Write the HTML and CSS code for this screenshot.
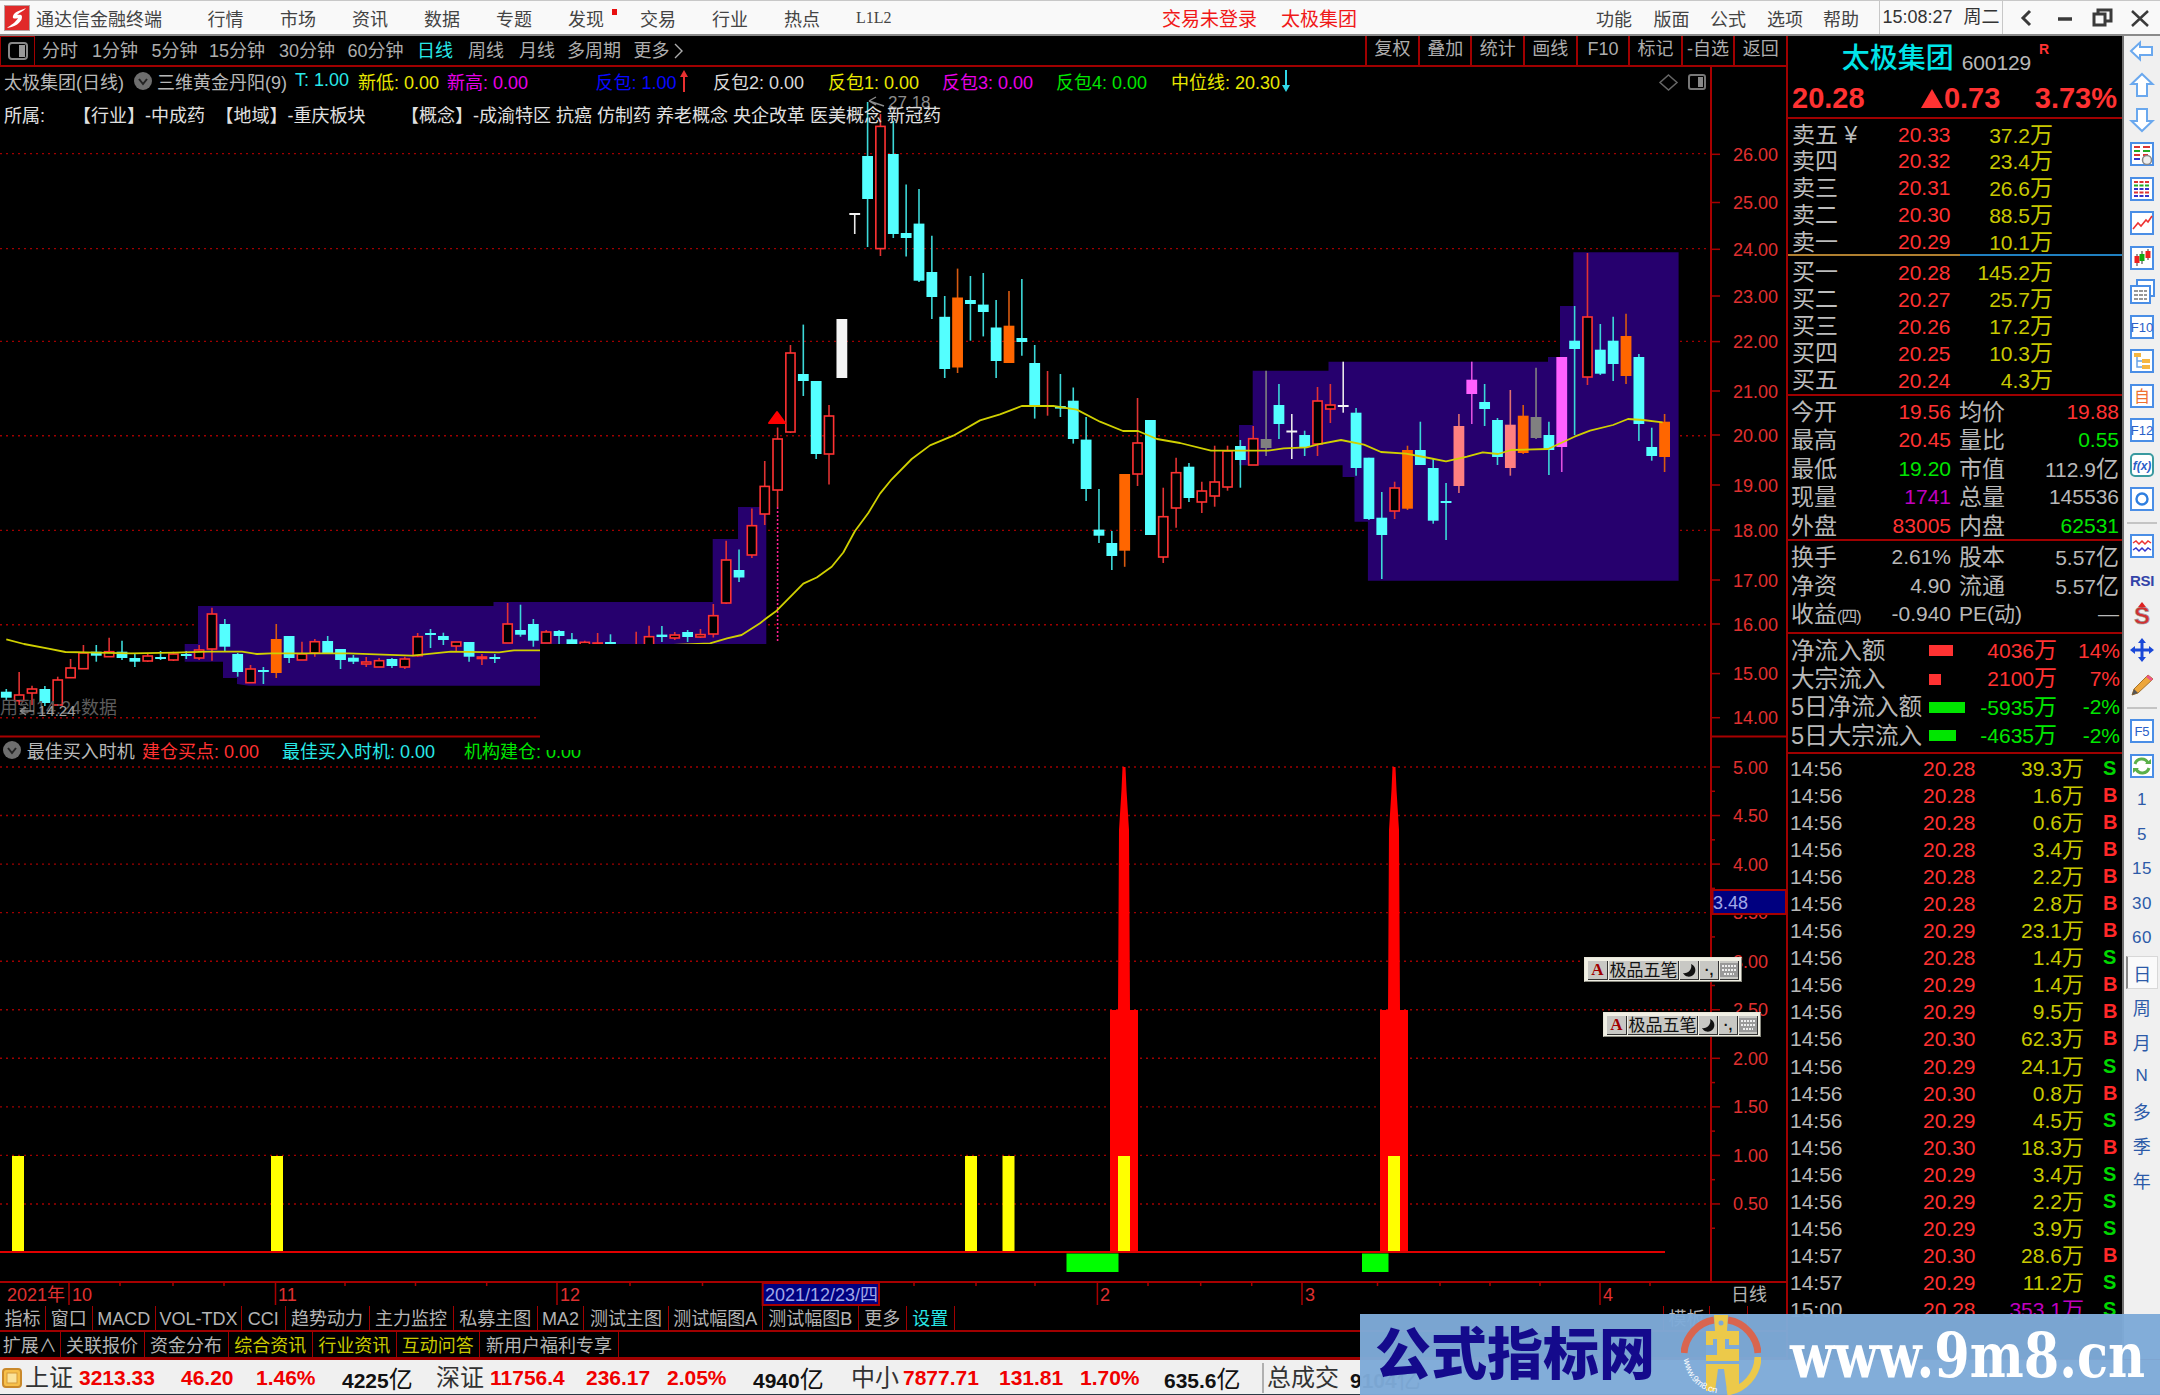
FILE: index.html
```html
<!DOCTYPE html>
<html lang="zh-CN">
<head>
<meta charset="utf-8">
<title>通达信金融终端</title>
<link rel="stylesheet" href="styles.css">
</head>
<body>
<div class="app">
  <header class="titlebar">
    <span class="logo"><svg width="26" height="26" viewBox="0 0 26 26"><rect width="26" height="26" fill="#e02a2a"/><rect x=".5" y=".5" width="25" height="25" fill="none" stroke="#b9a0a0"/><path d="M22 3 C16 6 11 6 9 11 C8 14 11 14 14 13 C12 17 7 20 3 23 C10 22 18 18 18 12 C18 9 15 10 13 10 C16 7 20 6 22 3Z" fill="#fff"/></svg></span>
    <span>通达信金融终端</span>
    <span>行情</span><span>市场</span><span>资讯</span><span>数据</span><span>专题</span>
    <span class="has-dot">发现<i class="dot"></i></span>
    <span>交易</span><span>行业</span><span>热点</span><span class="serif">L1L2</span>
    <span class="alert">交易未登录</span><span class="alert">太极集团</span>
    <span>功能</span><span>版面</span><span>公式</span><span>选项</span><span>帮助</span>
    <span class="clock">15:08:27 <em>周二</em></span>
    <span class="win"><svg width="148" height="30" viewBox="0 0 148 30" fill="none" stroke="#3a3a3a" stroke-width="3"><path d="M27 8 L20 15 L27 22"/><path d="M55 16 H69" stroke-width="3.5"/><rect x="91" y="11" width="11" height="11"/><path d="M95 11 V7 H108 V18 H102"/><path d="M129 8 L145 23 M145 8 L129 23" stroke-width="2.5"/></svg></span>
  </header>

  <div class="body">
    <div class="left">
      <div class="toolbar">
        <div class="periods">
          <span class="tb-icon"><svg width="20" height="18" viewBox="0 0 20 18"><rect x="1" y="1" width="18" height="16" rx="3" fill="none" stroke="#888" stroke-width="2"/><rect x="11" y="3" width="6" height="12" fill="#999"/></svg></span>
          <span>分时</span><span>1分钟</span><span>5分钟</span><span>15分钟</span><span>30分钟</span><span>60分钟</span>
          <span class="cyan">日线</span><span>周线</span><span>月线</span><span>多周期</span><span class="more">更多<svg width="9" height="16" viewBox="0 0 9 16"><path d="M1 1 L8 8 L1 15" fill="none" stroke="#adadad" stroke-width="1.4"/></svg></span>
        </div>
        <div class="tools">
          <span>复权</span><span>叠加</span><span>统计</span><span>画线</span><span>F10</span><span>标记</span><span>-自选</span><span>返回</span>
        </div>
      </div>

      <div class="chart">
        <svg id="kline" class="kline" width="1788" height="1239" viewBox="0 67 1788 1239"></svg>

        <div class="pane-legend">
          <span class="toggle"><svg width="18" height="18" viewBox="0 0 18 18"><circle cx="9" cy="9" r="9" fill="#6e6e6e"/><path d="M5 7 L9 12 L13 7" fill="none" stroke="#222" stroke-width="2"/></svg></span>
          <span class="grey">最佳买入时机</span>
          <span class="red">建仓买点: 0.00</span>
          <span class="cyan">最佳买入时机: 0.00</span>
          <span class="green">机构建仓: 0.00</span>
        </div>

        <div class="blackout"></div>

        <div class="info">
          <div class="info-row">
            <span class="grey">太极集团(日线)</span>
            <span class="toggle"><svg width="18" height="18" viewBox="0 0 18 18"><circle cx="9" cy="9" r="9" fill="#6e6e6e"/><path d="M5 7 L9 12 L13 7" fill="none" stroke="#222" stroke-width="2"/></svg></span>
            <span class="grey">三维黄金丹阳(9)</span>
            <span class="cyan">T: 1.00</span>
            <span class="yellow">新低: 0.00</span>
            <span class="magenta">新高: 0.00</span>
            <span class="blue">反包: 1.00</span>
            <span class="arrow"><svg width="8" height="22" viewBox="0 0 8 22"><path d="M4 0 L8 7 H5 V22 H3 V7 H0Z" fill="#e83030"/></svg></span>
            <span class="white">反包2: 0.00</span>
            <span class="yellow">反包1: 0.00</span>
            <span class="magenta">反包3: 0.00</span>
            <span class="green">反包4: 0.00</span>
            <span class="yellow">中位线: 20.30</span>
            <span class="arrow"><svg width="8" height="22" viewBox="0 0 8 22"><path d="M3 0 H5 V15 H8 L4 22 L0 15 H3Z" fill="#30d8e8"/></svg></span>
          </div>
          <div class="belong"><span>所属:</span><span>【行业】-中成药</span><span>【地域】-重庆板块</span><span>【概念】-成渝特区 抗癌 仿制药 养老概念 央企改革 医美概念 新冠药</span></div>
        </div>

        <div class="ime ime-a"><b>A</b><span>极品五笔</span><i class="ime-k"><svg width="14" height="14" viewBox="0 0 14 14"><path d="M9 1 A6.5 6.5 0 1 1 1 10 A7 7 0 0 0 9 1Z" fill="#111"/></svg></i><i class="ime-k">·,</i><i class="ime-k"><svg width="18" height="14" viewBox="0 0 18 14"><rect width="18" height="14" fill="#999"/><path d="M2 3 H16 M2 7 H16 M4 11 H14" stroke="#eee" stroke-width="2" stroke-dasharray="2 1"/></svg></i></div>
        <div class="ime ime-b"><b>A</b><span>极品五笔</span><i class="ime-k"><svg width="14" height="14" viewBox="0 0 14 14"><path d="M9 1 A6.5 6.5 0 1 1 1 10 A7 7 0 0 0 9 1Z" fill="#111"/></svg></i><i class="ime-k">·,</i><i class="ime-k"><svg width="18" height="14" viewBox="0 0 18 14"><rect width="18" height="14" fill="#999"/><path d="M2 3 H16 M2 7 H16 M4 11 H14" stroke="#eee" stroke-width="2" stroke-dasharray="2 1"/></svg></i></div>
      </div>

      <div class="tabs tabs-a">
        <span>指标</span><span>窗口</span><span>MACD</span><span>VOL-TDX</span><span>CCI</span><span>趋势动力</span><span>主力监控</span><span>私募主图</span><span>MA2</span><span>测试主图</span><span>测试幅图A</span><span>测试幅图B</span><span>更多</span><span class="cyan">设置</span><span class="blank"></span><span>模板</span><span>—</span>
      </div>
      <div class="tabs tabs-b">
        <span>扩展∧</span><span>关联报价</span><span>资金分布</span><span class="olive">综合资讯</span><span class="olive">行业资讯</span><span class="olive">互动问答</span><span>新用户福利专享</span>
      </div>
    </div>

    <aside class="quote">
      <div class="q-head"><span class="q-name">太极集团</span><span class="q-code">600129</span><span class="q-r">R</span></div>
      <div class="q-price"><b>20.28</b><b class="q-up"><i class="tri"></i>0.73</b><b>3.73%</b></div>

      <div class="book asks">
        <div><span>卖五 <u>¥</u></span><b>20.33</b><em>37.2<i>万</i></em></div>
        <div><span>卖四</span><b>20.32</b><em>23.4<i>万</i></em></div>
        <div><span>卖三</span><b>20.31</b><em>26.6<i>万</i></em></div>
        <div><span>卖二</span><b>20.30</b><em>88.5<i>万</i></em></div>
        <div><span>卖一</span><b>20.29</b><em>10.1<i>万</i></em></div>
      </div>
      <div class="twotone"></div>
      <div class="book bids">
        <div><span>买一</span><b>20.28</b><em>145.2<i>万</i></em></div>
        <div><span>买二</span><b>20.27</b><em>25.7<i>万</i></em></div>
        <div><span>买三</span><b>20.26</b><em>17.2<i>万</i></em></div>
        <div><span>买四</span><b>20.25</b><em>10.3<i>万</i></em></div>
        <div><span>买五</span><b>20.24</b><em>4.3<i>万</i></em></div>
      </div>

      <div class="stats s-a">
        <div><span>今开</span><b class="red">19.56</b><span>均价</span><b class="red">19.88</b></div>
        <div><span>最高</span><b class="red">20.45</b><span>量比</span><b class="green">0.55</b></div>
        <div><span>最低</span><b class="green">19.20</b><span>市值</span><b>112.9<i>亿</i></b></div>
        <div><span>现量</span><b class="purple">1741</b><span>总量</span><b>145536</b></div>
        <div><span>外盘</span><b class="red">83005</b><span>内盘</span><b class="green">62531</b></div>
      </div>
      <div class="stats s-b">
        <div><span>换手</span><b>2.61%</b><span>股本</span><b>5.57<i>亿</i></b></div>
        <div><span>净资</span><b>4.90</b><span>流通</span><b>5.57<i>亿</i></b></div>
        <div><span>收益<small>(四)</small></span><b>-0.940</b><span class="pe">PE(动)</span><b>—</b></div>
      </div>

      <div class="flows">
        <div><span>净流入额</span><i class="bar bar-up" style="width:24px"></i><b class="red">4036<i>万</i></b><b class="red">14%</b></div>
        <div><span>大宗流入</span><i class="bar bar-up" style="width:12px"></i><b class="red">2100<i>万</i></b><b class="red">7%</b></div>
        <div><span>5日净流入额</span><i class="bar bar-dn" style="width:36px"></i><b class="green">-5935<i>万</i></b><b class="green">-2%</b></div>
        <div><span>5日大宗流入</span><i class="bar bar-dn" style="width:27px"></i><b class="green">-4635<i>万</i></b><b class="green">-2%</b></div>
      </div>

      <div class="ticks">
        <div><span>14:56</span><b>20.28</b><em>39.3<i>万</i></em><u class="s">S</u></div>
        <div><span>14:56</span><b>20.28</b><em>1.6<i>万</i></em><u class="b">B</u></div>
        <div><span>14:56</span><b>20.28</b><em>0.6<i>万</i></em><u class="b">B</u></div>
        <div><span>14:56</span><b>20.28</b><em>3.4<i>万</i></em><u class="b">B</u></div>
        <div><span>14:56</span><b>20.28</b><em>2.2<i>万</i></em><u class="b">B</u></div>
        <div><span>14:56</span><b>20.28</b><em>2.8<i>万</i></em><u class="b">B</u></div>
        <div><span>14:56</span><b>20.29</b><em>23.1<i>万</i></em><u class="b">B</u></div>
        <div><span>14:56</span><b>20.28</b><em>1.4<i>万</i></em><u class="s">S</u></div>
        <div><span>14:56</span><b>20.29</b><em>1.4<i>万</i></em><u class="b">B</u></div>
        <div><span>14:56</span><b>20.29</b><em>9.5<i>万</i></em><u class="b">B</u></div>
        <div><span>14:56</span><b>20.30</b><em>62.3<i>万</i></em><u class="b">B</u></div>
        <div><span>14:56</span><b>20.29</b><em>24.1<i>万</i></em><u class="s">S</u></div>
        <div><span>14:56</span><b>20.30</b><em>0.8<i>万</i></em><u class="b">B</u></div>
        <div><span>14:56</span><b>20.29</b><em>4.5<i>万</i></em><u class="s">S</u></div>
        <div><span>14:56</span><b>20.30</b><em>18.3<i>万</i></em><u class="b">B</u></div>
        <div><span>14:56</span><b>20.29</b><em>3.4<i>万</i></em><u class="s">S</u></div>
        <div><span>14:56</span><b>20.29</b><em>2.2<i>万</i></em><u class="s">S</u></div>
        <div><span>14:56</span><b>20.29</b><em>3.9<i>万</i></em><u class="s">S</u></div>
        <div><span>14:57</span><b>20.30</b><em>28.6<i>万</i></em><u class="b">B</u></div>
        <div><span>14:57</span><b>20.29</b><em>11.2<i>万</i></em><u class="s">S</u></div>
        <div><span>15:00</span><b>20.28</b><em class="purple">353.1<i>万</i></em><u class="s">S</u></div>
      </div>
    </aside>

    <nav class="side">
      <a><svg class="ic" viewBox="0 0 28 28"><path class="ar" d="M3 14 L12 5.5 V10 H24 V18 H12 V22.5Z"/></svg></a>
      <a><svg class="ic" viewBox="0 0 28 28"><path class="ar" d="M14 3 L24.5 13 H19 V25 H9 V13 H3.5Z"/></svg></a>
      <a><svg class="ic" viewBox="0 0 28 28"><path class="ar" d="M14 25 L24.5 15 H19 V3 H9 V15 H3.5Z"/></svg></a>
      <a><svg class="ic" viewBox="0 0 28 28"><rect class="bx" x="3" y="3" width="22" height="22"/><path d="M6 7 H12 M15 7 H22" stroke="#d33" stroke-width="2"/><path d="M6 11 H12 M15 11 H22" stroke="#2a2" stroke-width="2"/><path d="M6 15 H12 M15 15 H20" stroke="#d33" stroke-width="2"/><path d="M6 19 H12" stroke="#33c" stroke-width="2"/><circle cx="19" cy="20" r="4.5" fill="#eee" stroke="#888" stroke-width="1.5"/></svg></a>
      <a><svg class="ic" viewBox="0 0 28 28"><rect class="bx" x="3" y="3" width="22" height="22"/><path d="M6 7 H22" stroke="#d33" stroke-width="2" stroke-dasharray="4 1.5"/><path d="M6 10.5 H22" stroke="#2a2" stroke-width="2" stroke-dasharray="4 1.5"/><path d="M6 14 H22" stroke="#33c" stroke-width="2" stroke-dasharray="4 1.5"/><path d="M6 17.5 H22" stroke="#d33" stroke-width="2" stroke-dasharray="4 1.5"/><path d="M6 21 H22" stroke="#33c" stroke-width="2" stroke-dasharray="4 1.5"/></svg></a>
      <a><svg class="ic" viewBox="0 0 28 28"><rect class="bx" x="3" y="3" width="22" height="22"/><path d="M5 20 L10 14 L13 17 L18 11 L20 13 L24 7" fill="none" stroke="#e33" stroke-width="1.6"/></svg></a>
      <a><svg class="ic" viewBox="0 0 28 28"><rect class="bx" x="3" y="3" width="22" height="22"/><path d="M9 10 V22 M14 7 V20 M20 5 V16" stroke="#333" stroke-width="1"/><rect x="6.5" y="12" width="5" height="7" fill="#e22"/><rect x="11.5" y="10" width="5" height="7" fill="#1a1"/><rect x="17.5" y="7" width="5" height="7" fill="#e22"/></svg></a>
      <a><svg class="ic" viewBox="0 0 28 28"><rect class="bx" x="9" y="2" width="17" height="16"/><rect class="bx" x="3" y="8" width="19" height="17"/><path d="M6 13 H19 M6 17 H19 M6 21 H19" stroke="#777" stroke-width="1.5" stroke-dasharray="4 1"/></svg></a>
      <a><svg class="ic" viewBox="0 0 28 28"><rect class="bx" x="3" y="3" width="22" height="22"/><text class="ic-t" x="14" y="19">F10</text></svg></a>
      <a><svg class="ic" viewBox="0 0 28 28"><rect class="bx" x="3" y="3" width="22" height="22"/><path d="M9 9 V20 H14 M9 14 H14" fill="none" stroke="#6aa4e8" stroke-width="1.5"/><rect x="6" y="6" width="7" height="4" fill="#f5b642"/><rect x="14" y="12" width="8" height="4" fill="#f5b642"/><rect x="14" y="18" width="8" height="4" fill="#f5b642"/></svg></a>
      <a><svg class="ic" viewBox="0 0 28 28"><rect class="bx" x="3" y="3" width="22" height="22"/><text class="ic-t ic-o" x="14" y="20">自</text></svg></a>
      <a><svg class="ic" viewBox="0 0 28 28"><rect class="bx" x="3" y="3" width="22" height="22"/><text class="ic-t" x="14" y="19">F12</text></svg></a>
      <a><svg class="ic" viewBox="0 0 28 28"><rect class="bx tl" x="3" y="3" width="22" height="22" rx="4"/><text class="ic-t ic-f" x="14" y="19">f(x)</text></svg></a>
      <a><svg class="ic" viewBox="0 0 28 28"><rect class="bx" x="3" y="3" width="22" height="22"/><circle cx="14" cy="14" r="5.5" fill="none" stroke="#2f7fe0" stroke-width="2.4"/></svg></a>
      <hr>
      <a><svg class="ic" viewBox="0 0 28 28"><rect class="bx" x="3" y="3" width="22" height="22"/><path d="M5 11 L8 9 L11 12 L14 9 L17 12 L20 9 L23 11" fill="none" stroke="#e33" stroke-width="1.5"/><path d="M5 18 L8 16 L11 19 L14 16 L17 19 L20 16 L23 18" fill="none" stroke="#33c" stroke-width="1.5"/></svg></a>
      <a class="rsi">RSI</a>
      <a><svg class="ic" viewBox="0 0 28 28"><text class="ic-s" x="14" y="23">S</text><path d="M14 1 L18 6 H10Z" fill="#d22"/></svg></a>
      <a><svg class="ic" viewBox="0 0 28 28"><path d="M14 2 L18 7 H15.5 V12.5 H21 V10 L26 14 L21 18 V15.5 H15.5 V21 H18 L14 26 L10 21 H12.5 V15.5 H7 V18 L2 14 L7 10 V12.5 H12.5 V7 H10Z" fill="#1a48d8"/></svg></a>
      <a><svg class="ic" viewBox="0 0 28 28"><path d="M4 25 L6 19 L20 5 L25 9 L10 23Z" fill="#eda63a" stroke="#a5722a"/><path d="M4 25 L6 19 L10 23Z" fill="#555"/><path d="M20 5 L25 9 L23 11 L18 7Z" fill="#e58"/></svg></a>
      <hr>
      <a><svg class="ic" viewBox="0 0 28 28"><rect class="bx" x="3" y="3" width="22" height="22"/><text class="ic-t" x="14" y="19">F5</text></svg></a>
      <a><svg class="ic" viewBox="0 0 28 28"><rect class="bx" x="3" y="3" width="22" height="22"/><path d="M7 12 A7 7 0 0 1 20 11 M21 16 A7 7 0 0 1 8 17" fill="none" stroke="#5ab04a" stroke-width="3"/><path d="M17 12 H23 V7Z M11 16 H5 V21Z" fill="#5ab04a"/></svg></a>
      <a class="num">1</a><a class="num">5</a><a class="num">15</a><a class="num">30</a><a class="num">60</a>
      <a class="num cn on">日</a><a class="num cn">周</a><a class="num cn">月</a><a class="num">N</a><a class="num cn">多</a><a class="num cn">季</a><a class="num cn">年</a>
    </nav>
  </div>

  <footer class="status">
    <span class="st-ic"><svg width="20" height="20" viewBox="0 0 20 20"><rect x="1" y="1" width="18" height="18" rx="3" fill="#f7c04a" stroke="#c9882a" stroke-width="2"/><rect x="5" y="5" width="10" height="10" fill="#fbe39a" stroke="#d59a3a"/></svg></span>
    <span class="st-l">上证</span><b>3213.33</b><b>46.20</b><b>1.46%</b><b class="k">4225<i>亿</i></b>
    <span class="st-l">深证</span><b>11756.4</b><b>236.17</b><b>2.05%</b><b class="k">4940<i>亿</i></b>
    <span class="st-l">中小</span><b>7877.71</b><b>131.81</b><b>1.70%</b><b class="k">635.6<i>亿</i></b>
    <span class="st-l st-sep">总成交</span><b class="k">9104<i>亿</i></b>
  </footer>

  <div class="watermark">
    <span class="wm-cn">公式指标网</span>
    <svg class="wm-logo" width="80" height="80" viewBox="0 0 80 80">
      <path d="M3 38 A36 36 0 0 1 33 5" fill="none" stroke="#d9654f" stroke-width="7"/>
      <path d="M47 5 A36 36 0 0 1 77 38" fill="none" stroke="#d9654f" stroke-width="7"/>
      <path d="M77 42 A36 36 0 0 1 46 77" fill="none" stroke="#ecc94a" stroke-width="7"/>
      <path d="M33 0 H47 L46 16 H58 V76 H46 L43 54 H37 L34 76 H25 V16 H34Z" fill="#ecc94a"/>
      <circle cx="40" cy="8" r="2.5" fill="#7eaad8"/>
      <path d="M25 30 H32 V24 H36 V40 H25 M44 24 H48 V30 H58 V34 H44Z M25 46 H58 V49 H25Z" fill="#7eaad8"/>
      <path id="wmarc" d="M3 44 A37 37 0 0 0 36 78" fill="none"/>
      <text class="wm-tiny"><textPath href="#wmarc">www.9m8.cn</textPath></text>
    </svg>
    <span class="wm-url">www.9m8.cn</span>
  </div>
</div>
<script src="script.js"></script>
</body>
</html>
```

FILE: styles.css
```css
* { box-sizing: border-box; }
html, body { margin: 0; padding: 0; background: #000; }
body { font-family: "Liberation Sans", "Noto Sans CJK SC", sans-serif; font-size: 18px; color: #bdbdbd; overflow: hidden; }
i, em, u { font-style: normal; text-decoration: none; }
.app { position: relative; width: 2160px; height: 1395px; display: flex; flex-direction: column; overflow: hidden; }

.red { color: #ff3232; } .cyan { color: #28e8e8; } .green { color: #00e600; } .yellow { color: #e8e800; }
.magenta { color: #e800e8; } .blue { color: #0808ff; } .white { color: #d8d8d8; } .grey { color: #b8b8b8; }
.olive { color: #c8c800; } .purple { color: #c000c0; }

/* title bar */
.titlebar { flex: none; height: 36px; padding-bottom: 2px; display: grid; align-items: center; background: #f9f9f9; border-top: 1px solid #c8c8c8; border-bottom: 2px solid #8a8a8a; color: #444; white-space: nowrap;
  grid-template-columns: 36px 171.5px 72.5px 72px 72px 72px 72px 72px 72px 72px 72px 306px 119px 315px 57.5px 56.5px 57px 56px 55.5px 124.5px 156.5px; }
.logo { display: flex; padding-left: 4px; }
.serif { font-family: "Liberation Serif", serif; font-size: 16px; }
.alert { color: #f01818; font-size: 19px; }
.has-dot { position: relative; }
.dot { position: absolute; left: 44px; top: 4px; width: 5px; height: 6px; background: #e81010; }
.clock { height: 33px; line-height: 32px; padding-left: 3px; border-left: 1px solid #c8c8c8; border-right: 1px solid #c8c8c8; color: #333; }
.clock em { margin-left: 6px; }
.win { display: flex; }

/* body */
.body { flex: none; height: 1323px; display: flex; }
.left { flex: none; width: 1788px; display: flex; flex-direction: column; border-right: 2px solid #a00000; }

.toolbar { flex: none; height: 31px; display: flex; justify-content: space-between; background: #000; border-bottom: 2px solid #a00000; color: #adadad; }
.periods { display: grid; align-items: center; grid-template-columns: 42px 50px 59.5px 57.5px 70px 68.6px 69.4px 51px 51px 48px 66.6px 80px; line-height: 26px; }
.tb-icon { height: 29px; width: 35px; display: flex; align-items: center; justify-content: center; border: 1px solid #a00000; border-bottom: 0; }
.more { display: flex; align-items: center; gap: 4px; }
.tools { display: flex; }
.tools span { width: 52.6px; line-height: 26px; text-align: center; border-left: 2px solid #a00000; }

.chart { position: relative; flex: none; height: 1239px; background: #000; }
.kline { display: block; }
.blackout { position: absolute; left: 540px; top: 577px; width: 1170px; height: 106px; background: #000; }

.info { position: absolute; left: 0; top: 0; white-space: nowrap; }
.info-row { height: 27px; padding-left: 4px; display: grid; align-items: center; grid-template-columns: 130px 23px 138px 63px 89px 148.5px 84.5px 33px 115px 114px 114px 115px 111px 10px; }
.toggle, .arrow { display: flex; }
.belong { margin-top: 8px; padding-left: 4px; line-height: 28px; color: #e0e0e0; display: grid; grid-template-columns: 69px 142.5px 185.5px 700px; }

.pane-legend { position: absolute; left: 0; top: 669px; height: 28px; padding-left: 3px; display: grid; align-items: center; white-space: nowrap; grid-template-columns: 23.7px 115.3px 140px 182px 140px; }

.ime { position: absolute; width: 158px; height: 25px; display: flex; gap: 1px; padding: 3px 2px 2px 3px; background: #f0efe4; border: 1px solid #e8e6d8; border-right-color: #8a8a80; border-bottom-color: #8a8a80; }
.ime-a { left: 1584px; top: 890px; }
.ime-b { left: 1603px; top: 945px; }
.ime b, .ime span, .ime-k { height: 19px; display: flex; align-items: center; justify-content: center; background: #c8c8c4; border-right: 1px solid #333; border-bottom: 1px solid #333; color: #111; }
.ime b { flex: none; width: 20px; color: #a00000; font: bold 17px "Liberation Serif", serif; }
.ime span { flex: none; width: 70px; font-size: 17px; line-height: 17px; white-space: nowrap; overflow: hidden; }
.ime-k { flex: none; width: 19px; font-size: 14px; font-weight: bold; }

.tabs { flex: none; display: grid; color: #b4b4b4; background: #000; border-bottom: 2px solid #a00000; white-space: nowrap; }
.tabs span { text-align: center; border-right: 1px solid #a00000; overflow: hidden; }
.tabs span.blank { border-right: 1px solid #a00000; }
.tabs-a { height: 26px; line-height: 24px; grid-template-columns: 46px 46.7px 63.3px 86px 43.6px 84px 84px 84.4px 46px 85px 93.7px 96px 48.3px 47.6px 709.4px 46px 38px; }
.tabs-a span { padding-top: 1px; }
.tabs-b { height: 27px; line-height: 24px; grid-template-columns: 60.6px 84px 84px 84.1px 84px 83.3px 139px; }
.tabs-b span { padding-top: 2px; }
.tabs-b span:last-child { border-right: 1px solid #a00000; }

/* quote panel */
.quote { flex: none; width: 334px; height: 1323px; background: #000; overflow: hidden; }
.q-head { height: 46px; position: relative; padding-left: 53.7px; display: flex; align-items: center; }
.q-name { font-size: 28px; line-height: 36px; color: #00e4e8; font-weight: 500; }
.q-code { margin: 8px 0 0 8px; font-size: 21px; color: #b8b8b8; letter-spacing: -.1px; }
.q-r { position: absolute; left: 251px; top: 5px; font-size: 14px; color: #ff3232; font-weight: bold; }
.q-price { height: 37px; padding: 0 5px 2px 4px; display: flex; justify-content: space-between; align-items: center; color: #ff3232; font-size: 29px; line-height: 33px; border-bottom: 2px solid #a00000; }
.q-up { display: flex; align-items: center; margin-left: 22px; }
.tri { width: 0; height: 0; margin-right: 1px; border-left: 11px solid transparent; border-right: 11px solid transparent; border-bottom: 19px solid #ff3232; }

.book { display: flex; flex-direction: column; }
.book div { display: grid; grid-template-columns: 106px 52px 103px; padding-left: 4px; }
.book span { font-size: 23px; color: #bdbdbd; white-space: nowrap; }
.book b { font-weight: normal; font-size: 21px; color: #ff3232; }
.book em { font-size: 21px; color: #c8c800; text-align: right; }
.book i { font-size: 23px; }
.book u { font-size: 23px; }
.asks { height: 135px; padding-top: 2.5px; }
.asks div { height: 26.75px; line-height: 26.75px; }
.twotone { height: 2px; background: linear-gradient(90deg, #b08030 0 172px, #2080c0 172px); }
.bids { height: 140px; padding-top: 2.5px; border-bottom: 2px solid #a00000; }
.bids div { height: 27px; line-height: 27px; }

.stats { padding-left: 3px; border-bottom: 2px solid #a00000; }
.stats div { display: grid; grid-template-columns: 64px 96px 69px 99px; }
.stats span { font-size: 23px; white-space: nowrap; color: #b8b8b8; }
.stats span:nth-child(3) { padding-left: 8px; }
.stats b { font-weight: normal; font-size: 21px; text-align: right; color: #b8b8b8; }
.stats i { font-size: 23px; }
.stats small { font-size: 16px; letter-spacing: -1px; }
.stats .pe { font-size: 21px; }
.stats b.red { color: #ff3232; } .stats b.green { color: #00e600; } .stats b.purple { color: #c000c0; }
.s-a { height: 145px; padding-top: 1.5px; }
.s-a div { height: 28.5px; line-height: 28.5px; }
.s-b { height: 93px; padding-top: 2px; }
.s-b div { height: 28.7px; line-height: 28.7px; }

.flows { height: 120px; padding: 2px 0 0 3px; border-bottom: 2px solid #a00000; }
.flows div { height: 28.4px; line-height: 28.4px; display: grid; grid-template-columns: 138px 45px 83px 63px; align-items: center; }
.flows span { font-size: 23.6px; color: #b8b8b8; white-space: nowrap; }
.flows b { font-weight: normal; font-size: 21px; text-align: right; white-space: nowrap; }
.flows b i { font-size: 23px; }
.bar { height: 11px; display: block; }
.bar-up { background: #ff3232; } .bar-dn { background: #00e600; }

.ticks { padding-top: 1px; }
.ticks div { height: 27.05px; line-height: 27.05px; padding-left: 2px; display: grid; grid-template-columns: 133px 54px 107px 36px; font-size: 21px; }
.ticks span { color: #b8b8b8; }
.ticks b { font-weight: normal; color: #ff3232; }
.ticks em { text-align: right; color: #c8c800; white-space: nowrap; }
.ticks em.purple { color: #c000c0; }
.ticks i { font-size: 22px; }
.ticks u { padding-left: 19px; font-weight: bold; font-size: 20px; }
.ticks .s { color: #00d800; } .ticks .b { color: #ff2828; }

/* right tool strip */
.side { flex: none; width: 38px; height: 1323px; padding-top: .6px; display: flex; flex-direction: column; align-items: center; gap: 6.5px; background: #f0f0f0; border-left: 2px solid #707070; }
.side a { width: 32px; height: 28px; flex: none; display: flex; align-items: center; justify-content: center; }
.side hr { width: 30px; height: 6px; flex: none; margin: 0; border: 0; background: linear-gradient(#c4c4c4, #c4c4c4) center / 100% 2px no-repeat; }
.ic { width: 28px; height: 28px; display: block; }
.ar { fill: #fff; stroke: #6aa8ee; stroke-width: 2; }
.bx { fill: #fff; stroke: #4a8ee6; stroke-width: 2; }
.bx.tl { stroke: #3a9aa0; }
.ic-t { font-size: 13px; fill: #2a60c8; text-anchor: middle; }
.ic-o { fill: #f07030; font-size: 16px; }
.ic-f { font-style: italic; font-size: 12px; font-weight: bold; }
.ic-s { font-size: 24px; font-weight: bold; fill: #d23030; text-anchor: middle; stroke: #999; stroke-width: .6; }
.rsi { font-size: 15px; font-weight: bold; color: #3444a8; letter-spacing: -.3px; }
.num { color: #2c5aa8; font-size: 17px; letter-spacing: .5px; }
.num.cn { font-size: 18px; }
.side .on { height: 33px; margin: -2.5px 0; background: #fafafa; border: 1px solid #d8d8d8; border-left: 2px solid #888; }

/* status bar */
.status { flex: none; height: 36px; padding-bottom: 1px; display: grid; align-items: center; background: #f0f0f0; border-top: 1px solid #a00000; border-bottom: 1px solid #2a3a44; color: #333; white-space: nowrap;
  grid-template-columns: 25px 54px 102px 75px 86px 94px 54px 96px 81px 86px 98px 52px 96px 81px 84px 102px 84px 200px; }
.st-ic { display: flex; padding-left: 2px; }
.st-l { font-size: 24px; line-height: 30px; }
.st-sep { border-left: 2px solid #b0b0b0; padding-left: 3px; margin-left: -4px; }
.status b { font-size: 21px; color: #f00000; }
.status b.k { color: #111; }
.status b i { font-weight: normal; font-size: 24px; }

/* watermark */
.watermark { position: absolute; left: 1360px; top: 1314px; width: 800px; height: 81px; display: flex; align-items: center; background: rgba(126, 170, 216, .97); }
.wm-cn { margin-left: 15px; width: 278px; font-size: 56px; line-height: 66px; font-weight: 900; color: #140a8c; white-space: nowrap; }
.wm-logo { margin-left: 28px; flex: none; }
.wm-tiny { font-size: 9px; fill: #fff; }
.wm-url { margin-left: 29px; font-family: "DejaVu Serif", serif; font-weight: bold; font-size: 51px; color: #fff; white-space: nowrap; transform: scaleY(1.2); }

/* svg chart */
.k-up { fill: #000; stroke: #ff3232; stroke-width: 1.6; }
.k-cy { fill: #54ffff; }
.k-or { fill: #ff6600; }
.k-pk { fill: #ff60ff; }
.k-sa { fill: #ff8080; }
.k-gy { fill: #808080; }
.k-wh { fill: #f4f4f4; }
.w-up { stroke: #e03232; }
.w-cy { stroke: #3cd8d8; }
.w-or { stroke: #d85a10; }
.w-pk { stroke: #e050e0; }
.w-sa { stroke: #e07070; }
.w-gy { stroke: #808080; }
.w-wh { stroke: #e8e8e8; }
.wick { stroke-width: 1.6; }
.grid-dot { stroke: #a00000; stroke-width: 1.4; stroke-dasharray: 2 4; }
.axis { stroke: #a80000; stroke-width: 2; fill: none; }
.axis-thin { stroke: #a80000; stroke-width: 1.5; }
.box-fill { fill: #26006e; }
.ma { fill: none; stroke: #d0d000; stroke-width: 1.8; stroke-linejoin: round; }
.pink-dot { stroke: #ff2090; stroke-width: 1.6; stroke-dasharray: 2 2; }
.mark { fill: #ff0000; stroke: #ff0000; stroke-width: 2; stroke-linejoin: round; }
.ax-t { font-size: 18px; fill: #e03030; }
.ax-g { font-size: 18px; fill: #b4b4b4; }
.dim { font-size: 18px; fill: #5c5c5c; }
.dim2 { font-size: 15px; fill: #a0a0a0; }
.peak { font-size: 17px; fill: #8c8c8c; }
.peak-l { stroke: #8c8c8c; stroke-width: 1.4; fill: none; }
.b-red { fill: #ff0000; }
.b-yel { fill: #ffff00; }
.b-grn { fill: #00ff00; }
.b-line { stroke: #e00000; stroke-width: 2; }
.cur-box { fill: #000080; stroke: #a80000; stroke-width: 2; }
.cur-t { font-size: 18px; fill: #a0a8e8; }
.diam { fill: none; stroke: #666; stroke-width: 1.5; }
.pan { fill: none; stroke: #777; stroke-width: 2; }
.pan-f { fill: #888; }
```

FILE: script.js
```js
// K-line chart: candle data is [index, kind, bodyTop, bodyBottom, wickTop, wickBottom] in chart pixels.
var NS = 'http://www.w3.org/2000/svg';
var svg = document.getElementById('kline');
function el(tag, attrs, text) {
  var n = document.createElementNS(NS, tag);
  for (var k in attrs) n.setAttribute(k, attrs[k]);
  if (text !== undefined) n.textContent = text;
  svg.appendChild(n);
  return n;
}
function X(i) { return 6.3 + i * 12.855; }

var C = [
[0,'cy',691.7,697.7,689,701],[1,'up',695,700.7,672,705],[2,'up',689,693,685.7,705],[3,'cy',689,703,686,706],
[4,'up',680,705,676.7,705],[5,'up',668,677.7,659,678],[6,'up',653,668.7,645,668.7],[7,'cy',651.7,655.7,645,661.7],
[8,'up',651.7,656.7,637.7,657],[9,'cy',651.7,658,640.7,660],[10,'cy',658,661.7,653,667],[11,'up',656,661,654,662],
[12,'cy',657,659,651,660],[13,'up',654,660,651.7,661],[14,'cy',654,655.5,651,659],[15,'up',650,658,645,660],
[16,'up',614,649,607.7,660.7],[17,'cy',624,646.7,619,651.7],[18,'cy',654,672,653,676.7],[19,'up',669,682.7,665,682.7],
[20,'cy',670,671.5,667,684],[21,'or',639,673,624,678],[22,'cy',636,658,636,663],[23,'up',654,660,641.7,660],
[24,'up',641.7,653,639,656.7],[25,'cy',641,653,636,653],[26,'cy',649,660,649,669],[27,'cy',657.7,661.7,655,664],
[28,'up',662,664,657,667],[29,'up',660.7,667,658,667],[30,'cy',659,666,658,668],[31,'up',659,667,656.7,669],
[32,'up',636.7,655.7,633,656.7],[33,'cy',633,634.5,629,648],[34,'cy',636,640,632.7,645],[35,'up',642,646,642,652],
[36,'cy',642,656.7,642,661.7],[37,'up',657,658.5,654,665],[38,'cy',657,658.5,654,663],[39,'up',624,643,603,643],
[40,'cy',630,634.7,604.7,636.7],[41,'cy',624,640.7,619,646.7],[42,'up',632,643,630,643],[43,'cy',631,636,630,644],
[44,'cy',639.3,644,633,644],[45,'up',642.3,649,640.7,650],[46,'up',643,644.5,633,650],[47,'cy',642,644,634.3,650],
[49,'up',645,650,631.7,655],[50,'up',636.7,650,625.7,652],[51,'cy',634.6,637,626,642],[52,'up',635,638,632,640],
[53,'cy',632,637,630,642],[54,'up',634.6,637,629,638],[55,'up',615.7,634,604,637.5],[56,'up',560,603,540.7,604],
[57,'cy',570,577.5,549.6,582],[58,'up',525.7,555,508.6,558],[59,'up',486.4,514,461,525],[60,'up',439,490,427.5,507],
[61,'up',353,432,345,433],[62,'cy',374,381,324.6,396],[63,'cy',381,454,381,459],[64,'up',416,454,405,484.6],
[65,'wh',319,378,319,378],[66,'wh',213,215,213,234],[67,'cy',156,199,102,247],[68,'up',126.4,248.6,114,256],
[69,'cy',154,234,121,238],[70,'cy',233,238,184.6,256.4],[71,'cy',223.6,280.7,189,282],[72,'cy',272,297,235.7,319],
[73,'cy',316.8,369,296,378],[74,'or',297.5,367.5,268.6,373],[75,'cy',300,304,276,340.7],[76,'cy',304.6,312,273,336.4],
[77,'cy',327.5,361,300,378],[78,'or',325.7,363,291,363],[79,'cy',338,342,279,355.7],[80,'cy',363,406,345,418.6],
[81,'up',406,406,371,415.7],[82,'cy',406,408.6,374,417],[83,'cy',400.7,439,387.5,443.6],[84,'cy',439.6,489,417,501],
[85,'cy',529.6,535.7,489,543],[86,'cy',543,556,531,570],[87,'or',474,550.7,474,566.8],[88,'up',443,474,398,486],
[89,'cy',420,535,420,535],[90,'up',516.7,557,487.7,563],[91,'up',472.7,508,457.7,527.7],[92,'cy',466.7,498,463,502],
[93,'up',491,502,481.7,513],[94,'up',482,496,445.7,506.7],[95,'up',451,487,445.7,490.7],[96,'cy',446,460,440,487.7],
[97,'up',438.7,465,426,465],[98,'gy',439,448,370.7,456],[99,'cy',405,424,384,439],[100,'wh',430.5,432,414,459],
[101,'cy',435,447,430.7,456],[102,'up',401,444,387,456],[103,'up',405,409,384,423],[104,'wh',405,406.5,361.7,412.7],
[105,'cy',412.7,468,408,475.7],[106,'cy',457.7,519,457.7,520],[107,'cy',517.7,535,492,579],[108,'up',488,511,481.7,519],
[109,'or',450,508.7,445.7,510],[110,'cy',450,465,421.7,465],[111,'cy',468,520.7,459,523.7],[112,'cy',501,502.5,483,540],
[113,'sa',426,486,414,493],[114,'pk',379.7,394,361.7,424],[115,'cy',402,409,384,426],[116,'cy',420,457,418,465],
[117,'sa',424.7,468,390,475.7],[118,'or',415.7,453,405,454],[119,'gy',417,438,367.7,439],[120,'cy',435,450,421.7,475],
[121,'pk',357,447,357,472],[122,'cy',340.7,349,306,435],[123,'up',317,377,253,385],[124,'cy',349.7,373.7,324,375],
[125,'cy',340.7,364,316.7,381],[126,'or',336,376,313.7,384],[127,'cy',357,424,354,441],[128,'cy',447,456,427.7,460.7],
[129,'or',421.7,457,414,472]
];

var MA = '6.3,639.3 24,644 48.5,648.7 65.4,652 97,652.7 131,653.3 174.5,652.7 208,651.7 242,651.7 257,654 271,653.3 349,653.3 383,654.7 412,655.7 451,651.7 499,652.3 514,650.3 540,650.3 710,643.3 727,638.3 741.6,635 760,623.3 766.7,618 776.7,610.7 803.3,583.6 816.7,577.5 831.7,566.8 843.3,552.5 855,531 868.3,513 880,493.6 891.7,479.3 911.7,459 930,445.4 953.3,435.7 980,420.4 1000,414.3 1021.7,406 1053.3,406 1076.7,409.6 1100,421.7 1123,431 1138,431 1157,439 1180,443 1211,450.7 1268,450.7 1283.7,448.3 1306.7,447.3 1318,444.3 1341,440 1364,444.7 1381,452 1406,453.7 1429,458 1446,461.3 1467,456.7 1482.7,452.3 1498,454 1511.4,450 1548,449 1574.5,436.7 1590,430.7 1613,425 1628,419 1643,420 1662.6,422.3';

var STEP = 48.55;

// price grid
[153.6, 248.6, 341.4, 435.7, 530.4, 624.7, 717.7].forEach(function (y) { el('line', {class: 'grid-dot', x1: 0, x2: 1710, y1: y, y2: y}); });
// volume-pane grid
for (var k = 0; k < 10; k++) { var gy = 767 + STEP * k; el('line', {class: 'grid-dot', x1: 0, x2: 1710, y1: gy, y2: gy}); }

// box zones
el('polygon', {class: 'box-fill', points: '184.7,644 198,644 198,606 493.5,606 493.5,602 712.7,602 712.7,539 738,539 738,507 766.3,507 766.3,644 540,644 540,685.7 249,685.7 237,684 237,678 223,678 223,661.7 184.7,661.7'});
el('polygon', {class: 'box-fill', points: '1239,425 1252.7,425 1252.7,370.7 1328.5,370.7 1328.5,361.7 1548,361.7 1548,357 1560,357 1560,306 1573.4,306 1573.4,252.3 1678.6,252.3 1678.6,580.7 1367.9,580.7 1367.9,521.7 1354.5,521.7 1354.5,477 1342.6,477 1342.6,465.3 1239,465.3'});

// candles
el('line', {class: 'pink-dot', x1: X(60), x2: X(60), y1: 507, y2: 643});
C.forEach(function (c) {
  var x = X(c[0]);
  el('line', {class: 'wick w-' + c[1], x1: x, x2: x, y1: c[4], y2: c[5]});
  if (c[2] === c[3]) return;
  if (c[1] === 'up') el('rect', {class: 'k-up', x: x - 4.6, width: 9.2, y: c[2], height: c[3] - c[2]});
  else el('rect', {class: 'k-' + c[1], x: x - 5.4, width: 10.8, y: c[2], height: Math.max(c[3] - c[2], 2)});
});
el('polyline', {class: 'ma', points: MA});
el('path', {class: 'mark', d: 'M777 412 L785 423 H769Z'});

// peak and current-data labels
el('path', {class: 'peak-l', d: 'M884 106 L869 101 M869 101 L876 97 M869 101 L876 105'});
el('text', {class: 'peak', x: 888, y: 108}, '27.18');
el('text', {class: 'dim', x: 0, y: 714}, '用到14:24数据');
el('path', {class: 'peak-l', d: 'M34 711 H20 M20 711 L26 707 M20 711 L26 715'});
el('text', {class: 'dim2', x: 38, y: 716}, '14.24');

// right axis frame
el('line', {class: 'axis', x1: 1711, x2: 1711, y1: 67, y2: 1282});
el('line', {class: 'axis', x1: 0, x2: 1787, y1: 736.5, y2: 736.5});
var P = [['26.00',154.3],['25.00',202.5],['24.00',249.3],['23.00',296],['22.00',341.6],['21.00',391],['20.00',435],['19.00',485],['18.00',530],['17.00',580],['16.00',624],['15.00',673.6],['14.00',717.7]];
P.forEach(function (p) {
  el('line', {class: 'axis-thin', x1: 1711, x2: 1720, y1: p[1], y2: p[1]});
  el('text', {class: 'ax-t', x: 1733, y: p[1] + 6.5}, p[0]);
});
for (var v = 0; v < 10; v++) {
  var y = 767 + STEP * v;
  el('line', {class: 'axis-thin', x1: 1711, x2: 1720, y1: y, y2: y});
  el('line', {class: 'axis-thin', x1: 1711, x2: 1715, y1: y + STEP / 2, y2: y + STEP / 2});
  el('text', {class: 'ax-t', x: 1733, y: y + 6.5}, (5 - v * 0.5).toFixed(2));
}
el('rect', {class: 'cur-box', x: 1712.5, y: 890, width: 73.5, height: 24});
el('text', {class: 'cur-t', x: 1713, y: 908.5}, '3.48');

// lower-pane indicator: tapered spikes
function spike(c) {
  return [c-1.5,767, c+1.5,767, c+2.5,790, c+5,830, c+6,1010, c+14,1010, c+14,1252, c-14,1252, c-14,1010, c-6,1010, c-5,830, c-2.5,790].join(' ');
}
el('polygon', {class: 'b-red', points: spike(1124)});
el('polygon', {class: 'b-red', points: spike(1394)});
[18, 277, 971, 1008.5, 1124, 1394].forEach(function (x) { el('rect', {class: 'b-yel', x: x - 6, y: 1156, width: 12, height: 96}); });
el('line', {class: 'b-line', x1: 0, x2: 1665, y1: 1252, y2: 1252});
el('rect', {class: 'b-grn', x: 1066.5, y: 1253.5, width: 52, height: 18.5});
el('rect', {class: 'b-grn', x: 1362, y: 1253.5, width: 26.5, height: 18.5});

// time axis
el('line', {class: 'axis', x1: 0, x2: 1787, y1: 1282, y2: 1282});
[69, 275.5, 557, 762.7, 879, 1097.4, 1302, 1600].forEach(function (x) { el('line', {class: 'axis-thin', x1: x, x2: x, y1: 1282, y2: 1305}); });
[120, 173, 224, 345, 415.5, 486.7, 630, 702.5, 914, 976, 1035, 1148, 1200.7, 1251.7, 1377.5, 1440, 1490, 1540, 1650].forEach(function (x) { el('line', {class: 'axis-thin', x1: x, x2: x, y1: 1282, y2: 1286}); });
el('text', {class: 'ax-t', x: 7, y: 1300.5}, '2021年');
[['10',72],['11',278],['12',560],['2',1100],['3',1305],['4',1603]].forEach(function (t) { el('text', {class: 'ax-t', x: t[1], y: 1300.5}, t[0]); });
el('rect', {class: 'cur-box', x: 762.7, y: 1283, width: 116.3, height: 22});
el('text', {class: 'cur-t', x: 765, y: 1300.5}, '2021/12/23/四');
el('text', {class: 'ax-g', x: 1731, y: 1300.5}, '日线');

// small corner icons
el('polygon', {class: 'diam', points: '1668.5,75 1677,82.5 1668.5,90 1660,82.5'});
el('rect', {class: 'pan', x: 1689, y: 75, width: 16, height: 14, rx: 2});
el('rect', {class: 'pan-f', x: 1698, y: 77, width: 5, height: 10});
```
